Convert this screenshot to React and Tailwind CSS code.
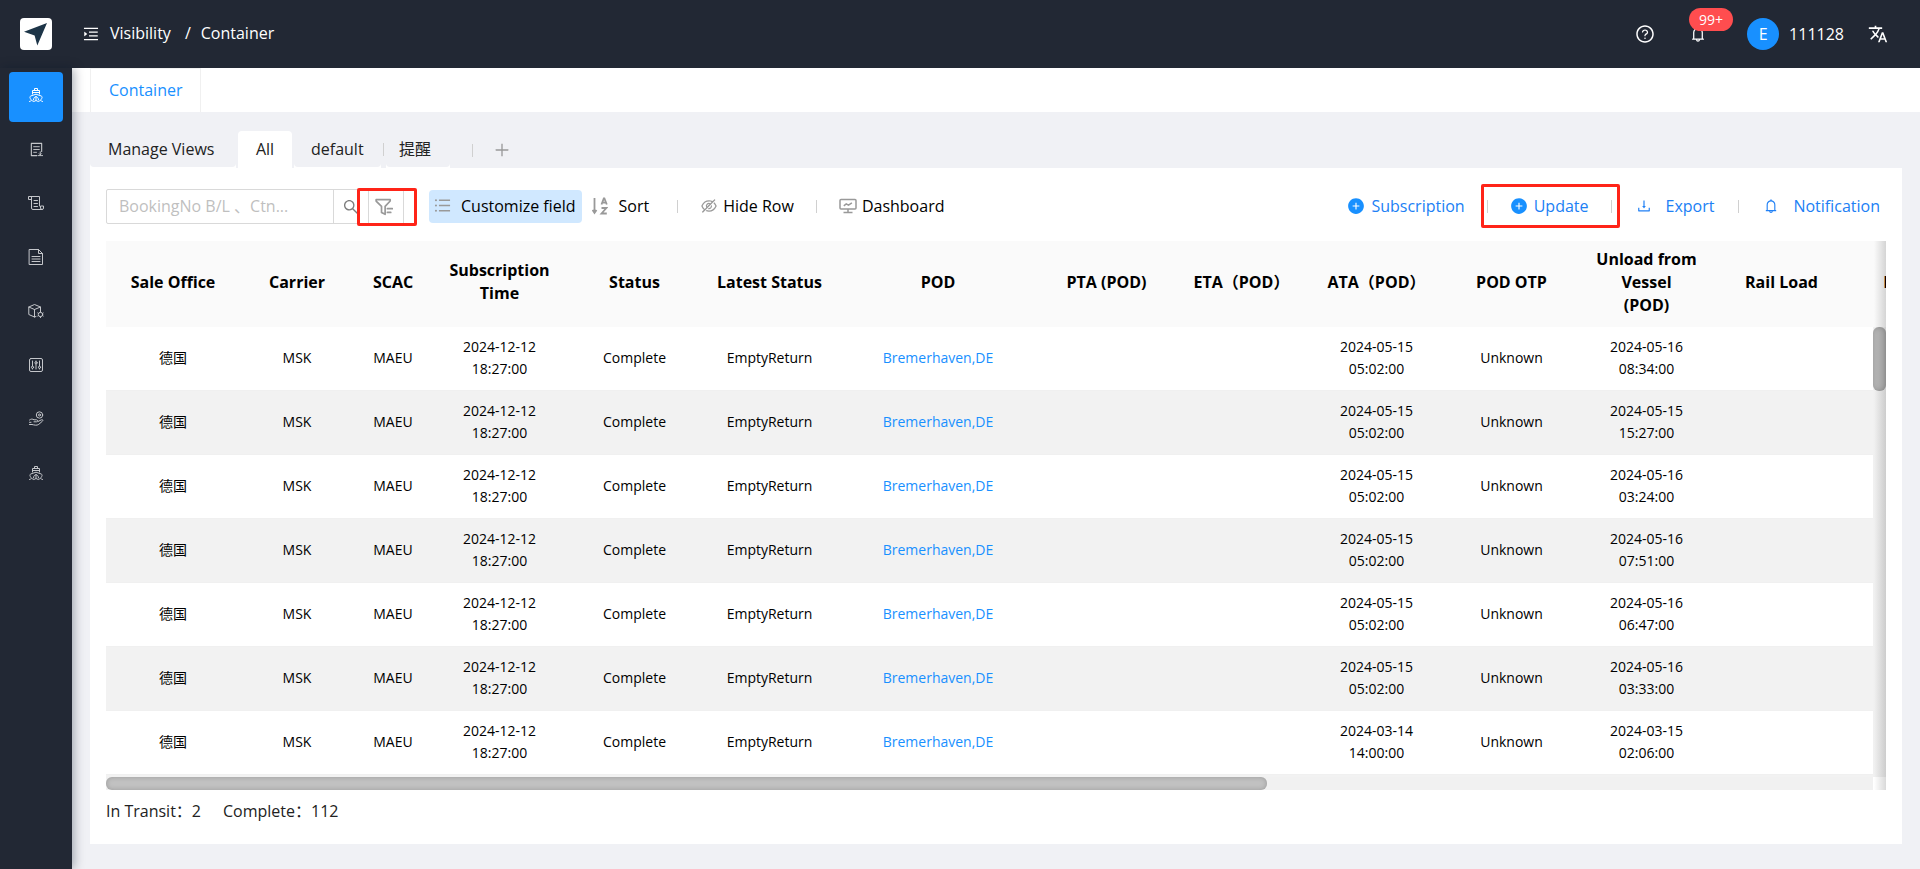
import React from 'react';
import {
    AiFillPlusCircle,
    AiOutlineBell,
    AiOutlineDownload,
    AiOutlineEyeInvisible,
    AiOutlineMenuUnfold,
    AiOutlinePlus,
    AiOutlineQuestionCircle,
    AiOutlineSearch,
    AiOutlineUnorderedList,
} from 'react-icons/ai';
import { MdTranslate } from 'react-icons/md';

// Thin line icon, all sidebar glyphs are drawn on a 16x16 grid
const LineIcon = ({ className = 'size-4', children }) => (
    <svg
        viewBox="0 0 16 16"
        className={className}
        fill="none"
        stroke="currentColor"
        strokeWidth="1"
        strokeLinecap="round"
        strokeLinejoin="round"
        aria-hidden="true"
    >
        {children}
    </svg>
);

const ShipIcon = () => (
    <LineIcon>
        <path d="M6.5 3.5v-2h3v2M4.5 7V3.500h7V7M4.500 5.500h7" />
        <path d="M3.200 12.800C1.200 10.500 1.800 9.400 3 8.900L8 7.200l5 1.700c1.200.500 1.800 1.600-.200 3.900" />
        <path d="M8 9.500v3.500M5.500 12.800c0-4.200 5-4.200 5 0" />
        <path d="M1.500 14.500c1.200 0 1.200-1 2.200-1s1.200 1 2.200 1 1.100-1 2.100-1 1.200 1 2.200 1 1.200-1 2.200-1 1 1 2.100 1" />
    </LineIcon>
);

const OrderIcon = () => (
    <LineIcon className="size-[15px]">
        <path d="M8.500 14.500h-6v-13h11v8.500" strokeWidth="1.200" />
        <path d="M5 5h6M5 8h6M5 11h3M12 10.500v3.500M10 14.500h4.500M10.800 12.500l1.200 1.200 1.200-1.200" />
    </LineIcon>
);

const ScrollIcon = () => (
    <LineIcon>
        <path d="M3.500 4.500h-3v-3h11v9.500M3.500 1.500v11.500a1.500 1.500 0 0 0 1.500 1.500h9a1.500 1.500 0 0 0 1.500-1.500v-2h-3v2a1.500 1.500 0 0 0 1.500 1.500" />
        <path d="M6 5.500h3.500M6 8.500h3.500M6 11.500h3.500" />
    </LineIcon>
);

const DocumentIcon = () => (
    <LineIcon>
        <path d="M1.500.500h9l4 4v11h-13zM10.500.500v4h4" />
        <path d="M4 7.500h8M4 10h8M4 12.500h8" />
    </LineIcon>
);

const BoxIcon = () => (
    <LineIcon>
        <path d="M8 13.500l-1.500.500L.800 11.500v-7.500L6.500 1.500l6 2.500v4M.800 4l5.700 2.500 6-2.500M6.500 6.500V14" />
        <circle cx="12.500" cy="11.500" r="2.200" />
        <path d="M12.500 8.400v.800M12.500 13.800v.800M9.800 10l.7.4M14.500 12.600l.7.400M9.800 13l.7-.400M14.500 10.400l.7-.400" />
    </LineIcon>
);

const SlidersIcon = () => (
    <LineIcon>
        <rect x="1.500" y="1.500" width="13" height="13" rx="1.500" />
        <path d="M4.500 4v5M4.500 11.500v.500M8 4v.800M8 7v5M11.500 4v5M11.500 11.500v.500" />
        <circle cx="4.500" cy="10.300" r="1.100" />
        <circle cx="8" cy="5.800" r="1.100" />
        <circle cx="11.500" cy="10.300" r="1.100" />
    </LineIcon>
);

const HandCoinIcon = () => (
    <LineIcon>
        <circle cx="11.500" cy="4" r="3.200" />
        <circle cx="11.500" cy="4" r="1" />
        <path d="M1.500 9c1.500-1.200 3-1.200 4.500-.200h2.500c1.500 0 1.500 2 0 2H6M10 10.500l3.500-1.700c1.500-.500 1.800.700.800 1.500l-3.500 3c-2 1.700-5 .500-6.800.200H1.500M1.500 11.300h1.500" />
    </LineIcon>
);

const LogoIcon = () => (
    <svg viewBox="0 0 32 32" className="size-8 rounded-sm bg-white" aria-hidden="true">
        <path d="M27 5 17.300 27.500 14.600 17.600 4 13.800z" fill="#1d3548" />
    </svg>
);

const FilterIcon = () => (
    <LineIcon className="size-[18px]">
        <path d="M1 1.500h12.500v1.200L9 7.500v7l-3.200-1.700V7.500L1 2.700z" strokeWidth="1.500" />
        <path d="M11 9.500h4.500M11 12.800h3" strokeWidth="1.500" />
    </LineIcon>
);

const SortIcon = () => (
    <svg viewBox="0 0 16 18" className="h-[18px] w-4" fill="none" stroke="currentColor" strokeWidth="1.800" aria-hidden="true">
        <path d="M2.500 1v15M.500 13l2 3 2-3" />
        <path d="M9.500 7.500 11.800 1.500h.6L14.800 7.500M10.300 5.600h3.600M9.500 11h4.800l-4.800 5.500h5.300" />
    </svg>
);

const MonitorIcon = () => (
    <svg viewBox="0 0 18 16" className="h-4 w-[18px]" fill="none" stroke="currentColor" strokeWidth="1.500" aria-hidden="true">
        <rect x="1" y="1.500" width="16" height="9.500" rx="1" />
        <path d="M9 11v3M4.500 14.500h9M4.800 7.800l2.400-2 2.300 1.400 3.400-2.400" />
    </svg>
);

const menuItems = [
    { label: 'Visibility', icon: ShipIcon, active: true },
    { label: 'Orders', icon: OrderIcon },
    { label: 'Bills', icon: ScrollIcon },
    { label: 'Documents', icon: DocumentIcon },
    { label: 'Warehouse', icon: BoxIcon },
    { label: 'Settings', icon: SlidersIcon },
    { label: 'Finance', icon: HandCoinIcon },
    { label: 'Shipping', icon: ShipIcon },
];

const columns = [
    { title: 'Sale Office', width: 'w-[134px]' },
    { title: 'Carrier', width: 'w-[114px]' },
    { title: 'SCAC', width: 'w-[78px]' },
    { title: 'Subscription\nTime', width: 'w-[135px]' },
    { title: 'Status', width: 'w-[135px]' },
    { title: 'Latest Status', width: 'w-[135px]' },
    { title: 'POD', width: 'w-[202px]' },
    { title: 'PTA (POD)', width: 'w-[135px]' },
    { title: 'ETA（POD）', width: 'w-[135px]' },
    { title: 'ATA（POD）', width: 'w-[135px]' },
    { title: 'POD OTP', width: 'w-[135px]' },
    { title: 'Unload from\nVessel\n(POD)', width: 'w-[135px]' },
    { title: 'Rail Load', width: 'w-[135px]' },
    { title: 'Rail ATD', width: 'w-[135px]' },
];

const rows = [
    { ata: '2024-05-15 05:02:00', unload: '2024-05-16 08:34:00' },
    { ata: '2024-05-15 05:02:00', unload: '2024-05-15 15:27:00' },
    { ata: '2024-05-15 05:02:00', unload: '2024-05-16 03:24:00' },
    { ata: '2024-05-15 05:02:00', unload: '2024-05-16 07:51:00' },
    { ata: '2024-05-15 05:02:00', unload: '2024-05-16 06:47:00' },
    { ata: '2024-05-15 05:02:00', unload: '2024-05-16 03:33:00' },
    { ata: '2024-03-14 14:00:00', unload: '2024-03-15 02:06:00' },
];

const Divider = () => <span className="h-[13px] w-px shrink-0 bg-[#d0d0d0]" />;

const Header = () => (
    <header className="flex h-[68px] items-center bg-[#222834] text-white">
        <a href="#home" aria-label="Home" className="flex w-[72px] justify-center">
            <LogoIcon />
        </a>
        <button type="button" aria-label="Toggle menu" className="ml-[10px]">
            <AiOutlineMenuUnfold className="size-[18px]" />
        </button>
        <nav className="ml-[10px] flex flex-1 gap-[14px] pb-0.5">
            <a href="#visibility">Visibility</a>
            <span className="flex gap-[10px]">
                <span>/</span>
                <a href="#container">Container</a>
            </span>
        </nav>
        <div className="flex items-center pr-8">
            <button type="button" aria-label="Help">
                <AiOutlineQuestionCircle className="size-5" />
            </button>
            <button type="button" aria-label="Messages" className="relative ml-[34px]">
                <AiOutlineBell className="size-[18px]" />
                <span className="absolute -top-[17px] left-0 rounded-full bg-[#ff4d4f] px-[10px] text-sm leading-[23px]">99+</span>
            </button>
            <button type="button" className="ml-10 flex items-center gap-[10px]">
                <span className="flex size-8 items-center justify-center rounded-full bg-[#1890ff]">E</span>
                <span>111128</span>
            </button>
            <button type="button" aria-label="Language" className="ml-6">
                <MdTranslate className="size-5" />
            </button>
        </div>
    </header>
);

const Sidebar = () => (
    <aside className="relative z-10 w-[72px] shrink-0 bg-[#222834] px-[9px] pt-1 shadow-[2px_0_10px_rgba(0,21,41,0.35)]">
        <nav className="flex flex-col gap-1">
            {menuItems.map((item) => (
                <a
                    key={item.label}
                    href="#menu"
                    aria-label={item.label}
                    className={`flex h-[50px] items-center justify-center rounded pb-1
                                ${item.active ? 'bg-[#1890ff] text-white' : 'text-[#c4c6ca]'}`}
                >
                    <item.icon />
                </a>
            ))}
        </nav>
    </aside>
);

// Grey view tab whose lower corners are cut out of a white strip
const ViewTab = ({ className, children }) => (
    <div className="bg-[linear-gradient(to_top,white_4px,transparent_4px)]">
        <button type="button" className={`h-9 rounded-b bg-[#f0f1f5] text-left ${className}`}>
            {children}
        </button>
    </div>
);

const ViewTabs = () => (
    <div className="flex h-[56px] items-end">
        <div className="flex gap-[2px]">
            <ViewTab className="w-[146px] px-[18px]">Manage Views</ViewTab>
            <button type="button" className="h-[37px] w-[54px] rounded-t bg-white pb-0.5">All</button>
            <ViewTab className="w-[87px] px-[17px]">default</ViewTab>
            <span className="flex items-center">
                <Divider />
            </span>
            <ViewTab className="w-[64px] px-[13px]">提醒</ViewTab>
        </div>
        <div className="flex h-9 items-center pl-[22px]">
            <Divider />
            <button type="button" aria-label="Add view" className="ml-[20px] text-[#999999]">
                <AiOutlinePlus className="size-[18px]" />
            </button>
        </div>
    </div>
);

const Toolbar = () => (
    <div className="flex items-center text-black">
        <div className="relative flex items-center">
            <input
                type="text"
                aria-label="Search"
                placeholder="BookingNo B/L 、Ctn..."
                className="h-[35px] w-[228px] rounded-l-xs border border-[#d9d9d9] px-3 pb-0.5 placeholder:text-[#bfbfbf]"
            />
            <button type="button" aria-label="Search" className="-ml-px flex h-[35px] w-9 items-center border border-[#d9d9d9] pl-[8px] text-[#7d7d7d]">
                <AiOutlineSearch className="size-[18px]" />
            </button>
            <button type="button" aria-label="Filter" className="-ml-px flex h-[35px] w-9 items-center justify-center border border-[#d9d9d9] pr-1 text-[#999999]">
                <FilterIcon />
            </button>
            <span className="pointer-events-none absolute top-[-1px] -right-[13px] h-[38px] w-[60px] rounded-xs border-3 border-[#ff2418]" />
        </div>
        <button type="button" className="ml-[25px] flex h-[33px] items-center gap-[9px] rounded bg-[#d0e8ff] pr-[6px] pb-0.5 pl-[4px]">
            <AiOutlineUnorderedList className="size-[19px] text-[#999999]" />
            Customize field
        </button>
        <button type="button" className="ml-[10px] flex items-center gap-[11px] pb-0.5">
            <span className="text-[#999999]">
                <SortIcon />
            </span>
            Sort
        </button>
        <div className="ml-[28px] flex items-center gap-[22px]">
            <Divider />
            <button type="button" className="flex items-center gap-[5px] pb-0.5">
                <AiOutlineEyeInvisible className="size-[18px] text-[#999999]" />
                Hide Row
            </button>
            <Divider />
            <button type="button" className="flex items-center gap-[5px] pb-0.5">
                <span className="text-[#999999]">
                    <MonitorIcon />
                </span>
                Dashboard
            </button>
        </div>
        <div className="ml-auto flex items-center pr-[6px] text-[#2080f5]">
            <button type="button" className="flex items-center gap-[6px] pb-0.5">
                <AiFillPlusCircle className="size-[18px] text-[#1890ff]" />
                Subscription
            </button>
            <div className="relative ml-[22px] flex items-center">
                <Divider />
                <button type="button" className="ml-[22px] flex items-center gap-[6px] pb-0.5">
                    <AiFillPlusCircle className="size-[18px] text-[#1890ff]" />
                    Update
                </button>
                <span className="ml-[22px] flex">
                    <Divider />
                </span>
                <span className="pointer-events-none absolute -top-[10px] -right-[8px] -left-[6px] h-[44px] rounded-xs border-3 border-[#ff2418]" />
            </div>
            <div className="ml-[24px] flex items-center gap-6">
                <button type="button" className="flex items-center gap-[14px] pb-0.5">
                    <AiOutlineDownload className="size-4" />
                    Export
                </button>
                <Divider />
                <button type="button" className="flex items-center gap-[14px] pb-0.5">
                    <AiOutlineBell className="size-4" />
                    Notification
                </button>
            </div>
        </div>
    </div>
);

const ContainerTable = () => (
    <div className="relative mt-[17px] overflow-hidden">
        <table className="w-max table-fixed border-separate border-spacing-0 text-center text-sm leading-[22px] text-black">
            <thead className="bg-[#fafafa] text-base leading-[23px]">
                <tr className="h-[86px]">
                    {columns.map((col) => (
                        <th key={col.title} className={`${col.width} px-3 pt-0 pb-1 font-bold whitespace-pre-line`}>
                            {col.title}
                        </th>
                    ))}
                </tr>
            </thead>
            <tbody>
                {rows.map((row, i) => (
                    <tr key={i} className="h-16 even:bg-[#f2f2f2] *:border-b *:border-[#f0f0f0] *:pb-px">
                        <td>德国</td>
                        <td>MSK</td>
                        <td>MAEU</td>
                        <td className="px-6">2024-12-12 18:27:00</td>
                        <td>Complete</td>
                        <td>EmptyReturn</td>
                        <td>
                            <a href="#pod" className="text-[#1890ff]">Bremerhaven,DE</a>
                        </td>
                        <td />
                        <td />
                        <td className="px-6">{row.ata}</td>
                        <td>Unknown</td>
                        <td className="px-6">{row.unload}</td>
                        <td />
                        <td />
                    </tr>
                ))}
            </tbody>
        </table>
        <div className="h-[2px] bg-[#f2f2f2]" />
        <div className="mr-[13px] h-[13px] bg-[#f1f1f1]">
            <div className="h-full w-[65.7%] rounded-md bg-[#c1c1c1] shadow-[inset_0_0_5px_rgba(0,0,0,0.2)]" />
        </div>
        {/* Vertical scrollbar beside the body rows */}
        <div className="absolute top-[86px] right-0 bottom-[13px] w-[13px] bg-[#f1f1f1]">
            <div className="h-16 rounded-md bg-[#b9b9b9] shadow-[inset_0_0_5px_rgba(0,0,0,0.2)]" />
        </div>
        <div className="pointer-events-none absolute inset-y-0 right-0 w-3 bg-linear-to-l from-black/15 to-transparent" />
    </div>
);

const App = () => {
    return (
        <div className="flex min-h-screen flex-col bg-[#f0f1f5] font-['Open_Sans','Noto_Sans_CJK_SC',sans-serif] text-base text-[#222222]">
            <Header />
            <div className="flex flex-1">
                <Sidebar />
                <div className="min-w-0 flex-1">
                    <div className="flex h-11 bg-white pl-[18px]">
                        <a href="#container" className="flex items-center border-x border-t border-[#f0f0f0] px-[18px] pb-0.5 text-[#1890ff]">
                            Container
                        </a>
                    </div>
                    <main className="pr-[18px] pb-6 pl-[18px]">
                        <ViewTabs />
                        <section className="bg-white px-4 pt-[21px] pb-[21px]">
                            <Toolbar />
                            <ContainerTable />
                            <div className="flex gap-[22px] pt-[9px]">
                                <span>In Transit：2</span>
                                <span>Complete：112</span>
                            </div>
                        </section>
                    </main>
                </div>
            </div>
        </div>
    );
};

export default App;
